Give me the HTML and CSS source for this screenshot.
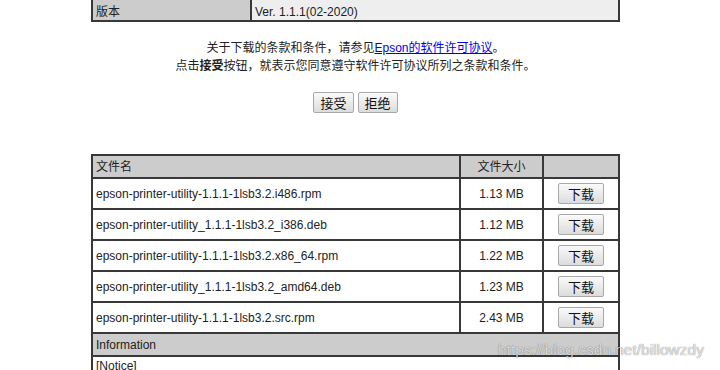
FILE: index.html
```html
<!DOCTYPE html>
<html>
<head>
  <title>Epson 下载</title>
  <link rel="stylesheet" href="styles.css">
</head>
<body>
<div class="page">
  <table class="info-table">
    <tr>
      <td class="info-label">版本</td>
      <td class="info-value">Ver. 1.1.1(02-2020)</td>
    </tr>
  </table>

  <div class="terms">
    <p>关于下载的条款和条件，请参见<a href="#">Epson的软件许可协议</a>。</p>
    <p>点击<b>接受</b>按钮，就表示您同意遵守软件许可协议所列之条款和条件。</p>
  </div>

  <div class="terms-buttons">
    <button class="btn">接受</button>
    <button class="btn">拒绝</button>
  </div>

  <table class="file-table">
    <tr class="head">
      <td class="file-name">文件名</td>
      <td class="file-size">文件大小</td>
      <td class="file-action"></td>
    </tr>
    <tr>
      <td class="file-name">epson-printer-utility-1.1.1-1lsb3.2.i486.rpm</td>
      <td class="file-size">1.13 MB</td>
      <td class="file-action"><button class="btn">下载</button></td>
    </tr>
    <tr>
      <td class="file-name">epson-printer-utility_1.1.1-1lsb3.2_i386.deb</td>
      <td class="file-size">1.12 MB</td>
      <td class="file-action"><button class="btn">下载</button></td>
    </tr>
    <tr>
      <td class="file-name">epson-printer-utility-1.1.1-1lsb3.2.x86_64.rpm</td>
      <td class="file-size">1.22 MB</td>
      <td class="file-action"><button class="btn">下载</button></td>
    </tr>
    <tr>
      <td class="file-name">epson-printer-utility_1.1.1-1lsb3.2_amd64.deb</td>
      <td class="file-size">1.23 MB</td>
      <td class="file-action"><button class="btn">下载</button></td>
    </tr>
    <tr>
      <td class="file-name">epson-printer-utility-1.1.1-1lsb3.2.src.rpm</td>
      <td class="file-size">2.43 MB</td>
      <td class="file-action"><button class="btn">下载</button></td>
    </tr>
    <tr class="head info-head">
      <td colspan="3">Information</td>
    </tr>
    <tr class="notice">
      <td colspan="3">[Notice]</td>
    </tr>
  </table>
</div>
<div class="watermark">https://blog.csdn.net/billowzdy</div>
</body>
</html>
```

FILE: styles.css
```css
html, body {
  margin: 0;
  padding: 0;
  background: #fff;
}

body {
  font-family: Tahoma, "Liberation Sans", "Noto Sans CJK SC", sans-serif;
  font-size: 12px;
  color: #222;
  overflow: hidden;
  height: 370px;
  position: relative;
}

.page {
  width: 529px;
  margin-left: 91px;
}

table {
  width: 100%;
  border-collapse: separate;
  border-spacing: 0;
  border: 1px solid #383838;
}

td {
  border: 1px solid #383838;
  padding: 0 3px;
  line-height: 14px;
}

.info-table {
  border-top: 0;
}

.info-table td {
  border-top: 0;
  height: 17px;
  padding-top: 3px;
  padding-bottom: 0;
}

.info-label {
  width: 151px;
  background: #cccccc;
}

.info-value {
  background: #eeeeee;
}

.terms {
  margin-top: 17px;
  text-align: center;
}

.terms p {
  margin: 0;
  line-height: 18px;
}

.terms a {
  color: #0000ee;
  text-decoration: underline;
}

.terms-buttons {
  margin-top: 17px;
  text-align: center;
  font-size: 0;
}

.terms-buttons .btn {
  margin: 0 2px;
}

.btn {
  font-family: "Noto Sans CJK SC", sans-serif;
  font-size: 13px;
  line-height: 15px;
  height: 21px;
  padding: 0 6px;
  color: #111;
  background: linear-gradient(#fafafa, #dcdcdc);
  border: 1px solid #a8a8a8;
  border-radius: 2px;
}

.file-table {
  margin-top: 41px;
}

.file-table td {
  height: 29px;
  padding-top: 0;
  padding-bottom: 0;
}

.file-table .head td {
  height: 21px;
  background: #cccccc;
}

.file-size {
  width: 75px;
  text-align: center;
}

.file-action {
  width: 68px;
  text-align: center;
}

.file-action .btn {
  width: 46px;
  padding: 0;
}

.file-table .notice td {
  height: 20px;
  vertical-align: top;
  padding-top: 2px;
}

.watermark {
  position: absolute;
  left: 498px;
  top: 341px;
  font-family: "Liberation Sans", sans-serif;
  font-size: 15.5px;
  color: rgba(255, 255, 255, 0.75);
  text-shadow: 0 0 1px rgba(0, 0, 0, 0.4), 0 0 1px rgba(0, 0, 0, 0.25);
}
```
